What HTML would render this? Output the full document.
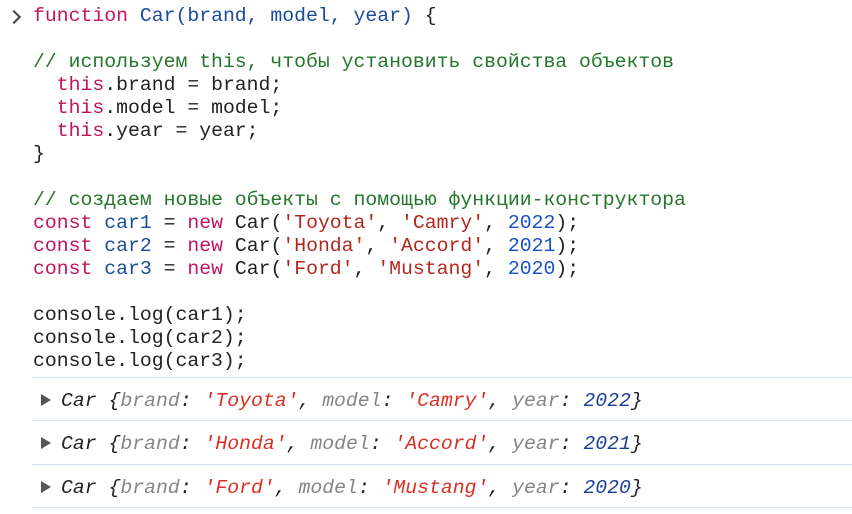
<!DOCTYPE html>
<html><head><meta charset="utf-8"><style>
body{margin:0;background:#fff;width:852px;height:514px;overflow:hidden;font-family:"Liberation Mono","DejaVu Sans Mono",monospace;font-size:19.8px;color:#202124}
pre{margin:0;position:absolute;left:33px;top:5px;line-height:23px;font-family:inherit;font-size:inherit}
.k{color:#c0145f}.f{color:#1a4a9c}.s{color:#b3261e}.n{color:#1750c4}.c{color:#22772a}
.prompt{position:absolute;left:9px;top:6px;width:8px;height:8px;border-right:2px solid #444;border-bottom:2px solid #444;transform:translateY(6px) rotate(-45deg)}
.row{position:absolute;left:32px;width:820px;height:43px;border-top:1px solid #d3def4;font-style:italic;line-height:43px}
.row .t{position:absolute;left:29px;top:2px}
.tri{position:absolute;left:9px;top:16px;width:0;height:0;border-left:10px solid #555;border-top:6.5px solid transparent;border-bottom:6.5px solid transparent}
.p{color:#858585}.r{color:#d93025;}.d{color:#1a3e96}
.bot{position:absolute;left:32px;top:507px;width:820px;border-top:1px solid #d3def4}
</style></head><body>
<div class="prompt"></div>
<pre><span class="k">function</span> <span class="f">Car(brand, model, year)</span> {

<span class="c">// используем this, чтобы установить свойства объектов</span>
  <span class="k">this</span>.brand = brand;
  <span class="k">this</span>.model = model;
  <span class="k">this</span>.year = year;
}

<span class="c">// создаем новые объекты с помощью функции-конструктора</span>
<span class="k">const</span> <span class="f">car1</span> = <span class="k">new</span> Car(<span class="s">'Toyota'</span>, <span class="s">'Camry'</span>, <span class="n">2022</span>);
<span class="k">const</span> <span class="f">car2</span> = <span class="k">new</span> Car(<span class="s">'Honda'</span>, <span class="s">'Accord'</span>, <span class="n">2021</span>);
<span class="k">const</span> <span class="f">car3</span> = <span class="k">new</span> Car(<span class="s">'Ford'</span>, <span class="s">'Mustang'</span>, <span class="n">2020</span>);

console.log(car1);
console.log(car2);
console.log(car3);</pre>
<div class="row" style="top:377px"><div class="tri"></div><div class="t">Car {<span class="p">brand</span>: <span class="r">'Toyota'</span>, <span class="p">model</span>: <span class="r">'Camry'</span>, <span class="p">year</span>: <span class="d">2022</span>}</div></div>
<div class="row" style="top:420px"><div class="tri"></div><div class="t">Car {<span class="p">brand</span>: <span class="r">'Honda'</span>, <span class="p">model</span>: <span class="r">'Accord'</span>, <span class="p">year</span>: <span class="d">2021</span>}</div></div>
<div class="row" style="top:464px"><div class="tri"></div><div class="t">Car {<span class="p">brand</span>: <span class="r">'Ford'</span>, <span class="p">model</span>: <span class="r">'Mustang'</span>, <span class="p">year</span>: <span class="d">2020</span>}</div></div>
<div class="bot"></div>
</body></html>
